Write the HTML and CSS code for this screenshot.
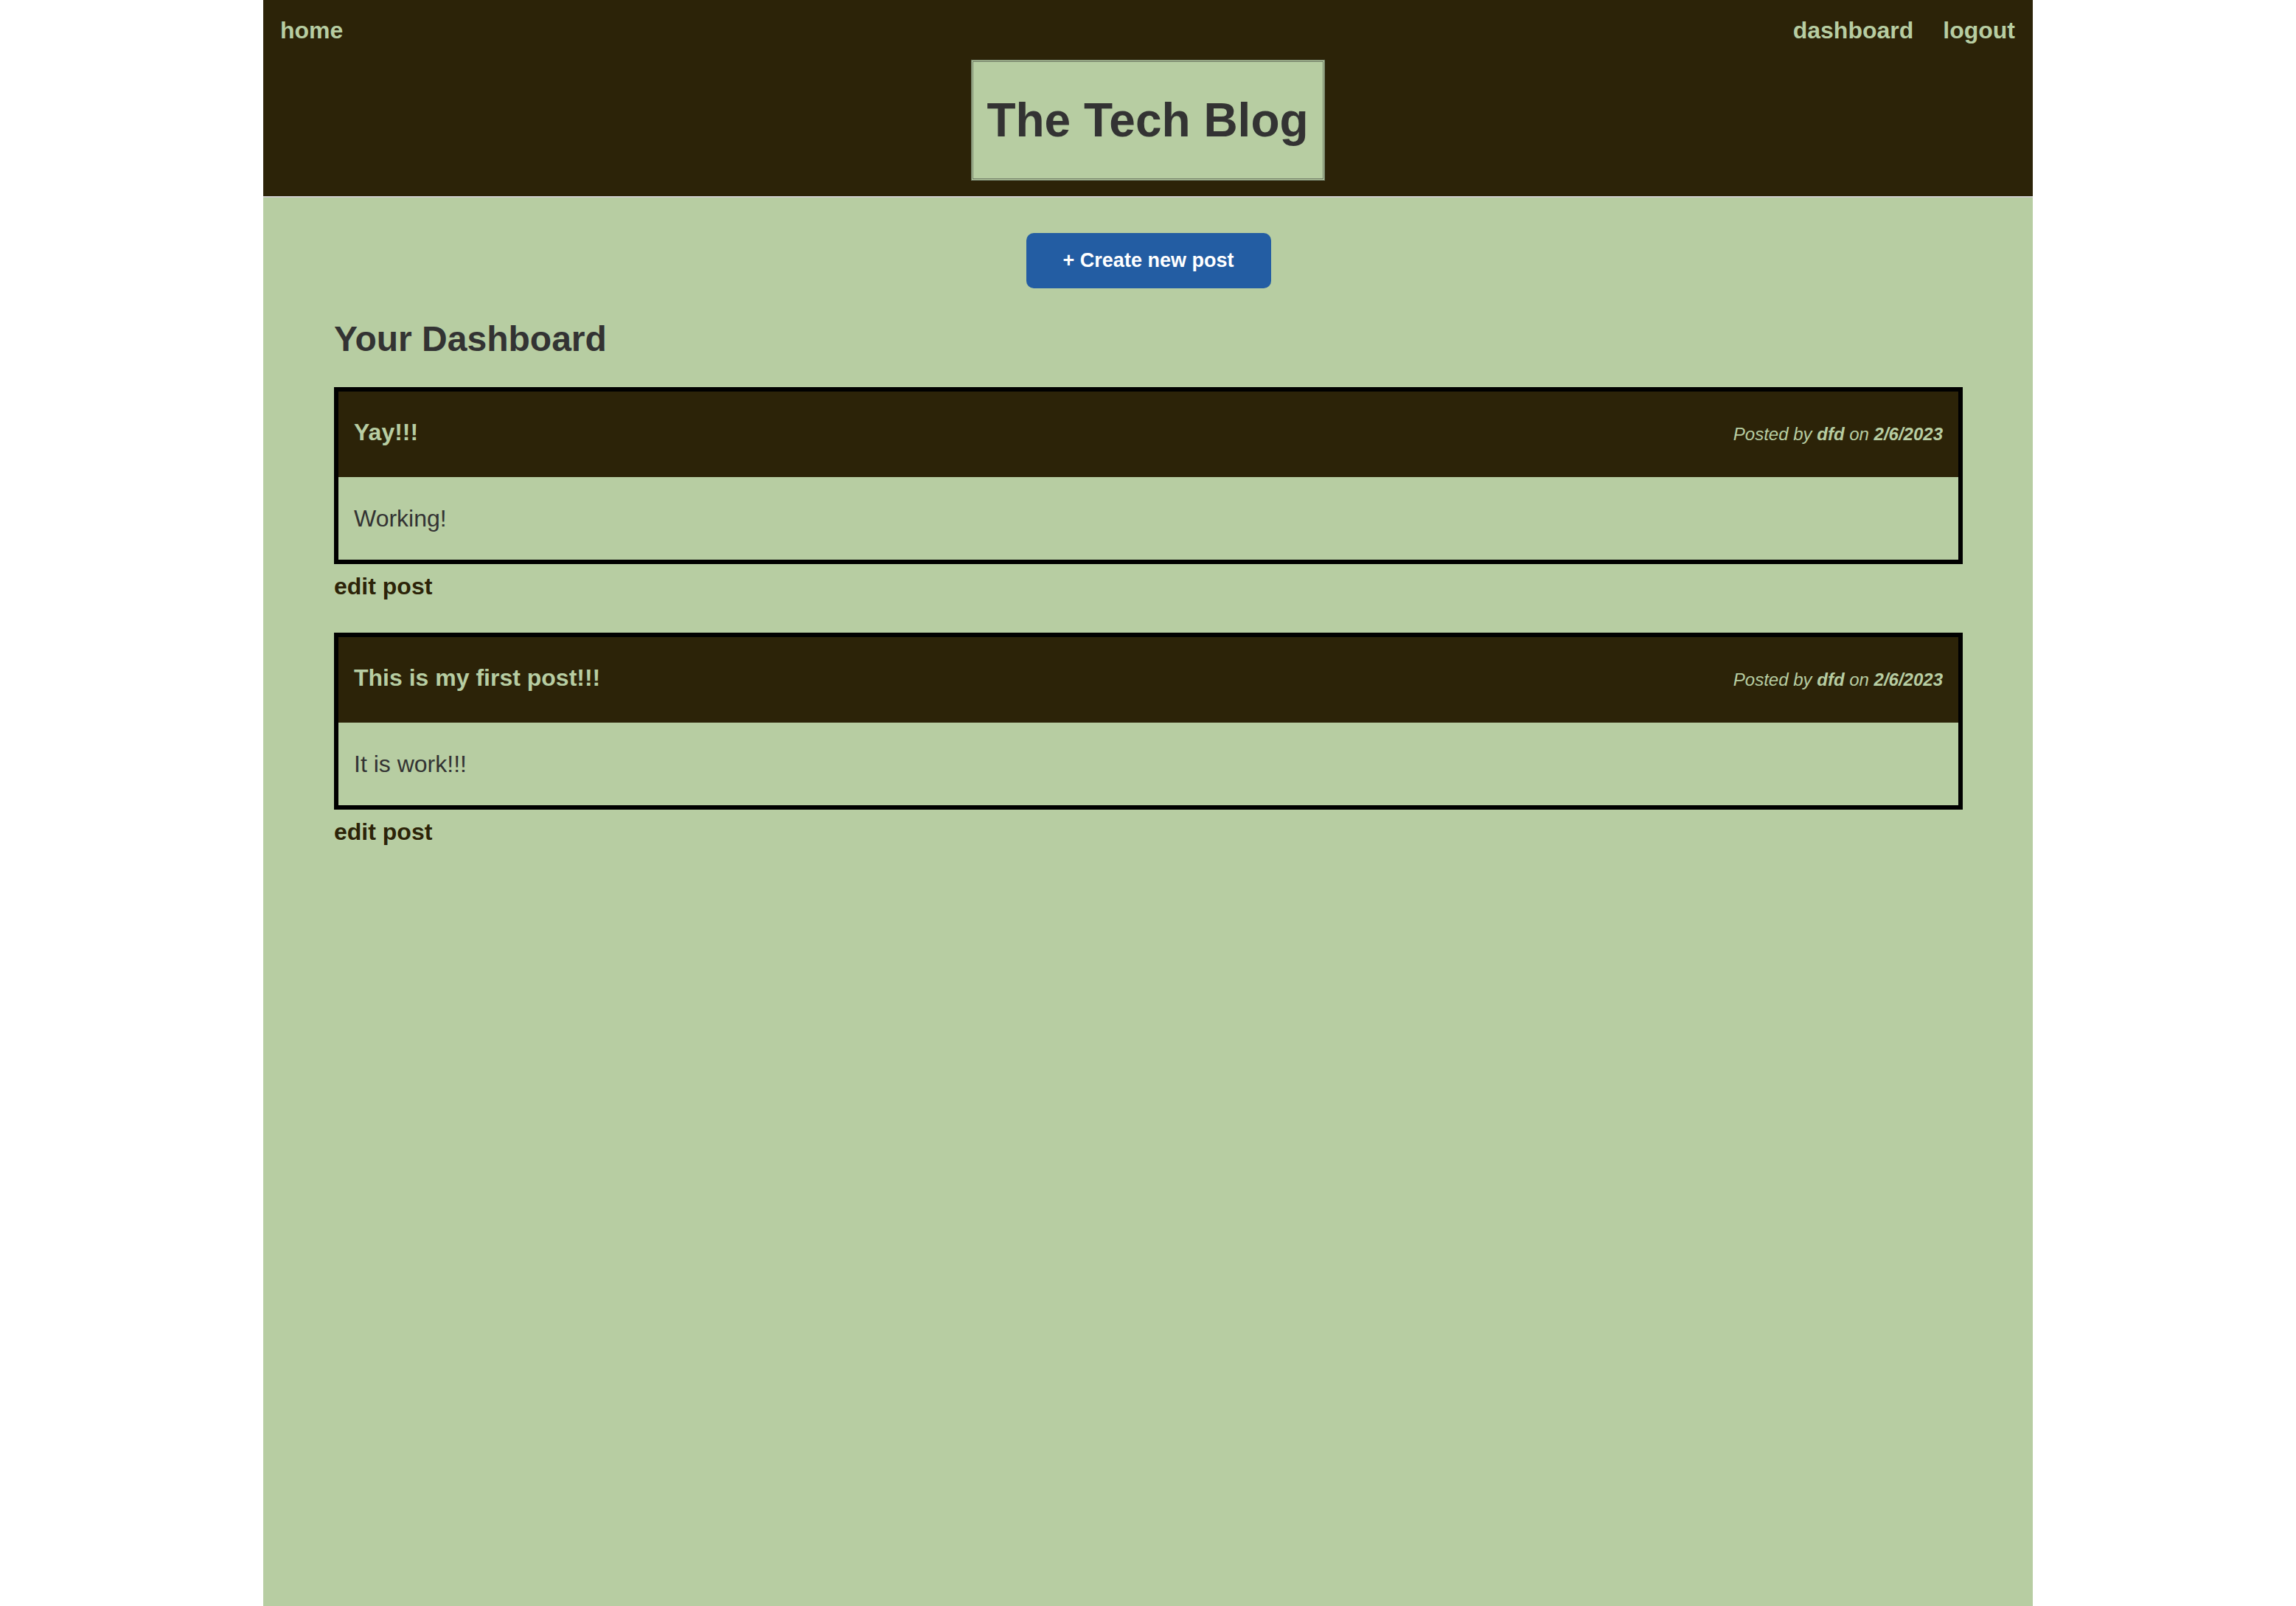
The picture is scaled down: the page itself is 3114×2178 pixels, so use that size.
FILE: index.html
```html
<!DOCTYPE html>
<html lang="en">
<head>
<meta charset="utf-8">
<title>The Tech Blog</title>
<link rel="stylesheet" href="styles.css">
</head>
<body>
<div class="page">
  <header class="site-header">
    <nav class="nav">
      <a class="nav-link" href="#">home</a>
      <div class="nav-right">
        <a class="nav-link" href="#">dashboard</a>
        <a class="nav-link" href="#">logout</a>
      </div>
    </nav>
    <div class="brand">
      <h1 class="brand-title">The Tech Blog</h1>
    </div>
  </header>
  <main class="main">
    <div class="actions">
      <button class="btn-create">+ Create new post</button>
    </div>
    <h2 class="dash-title">Your Dashboard</h2>

    <article class="post">
      <div class="post-head">
        <h3 class="post-title">Yay!!!</h3>
        <p class="post-meta">Posted by <b>dfd</b> on <b>2/6/2023</b></p>
      </div>
      <div class="post-body">Working!</div>
    </article>
    <a class="edit-link" href="#">edit post</a>

    <article class="post">
      <div class="post-head">
        <h3 class="post-title">This is my first post!!!</h3>
        <p class="post-meta">Posted by <b>dfd</b> on <b>2/6/2023</b></p>
      </div>
      <div class="post-body">It is work!!!</div>
    </article>
    <a class="edit-link" href="#">edit post</a>
  </main>
</div>
</body>
</html>
```

FILE: styles.css
```css
html, body {
  margin: 0;
  padding: 0;
  background: #ffffff;
}

body {
  font-family: "Liberation Sans", Helvetica, Arial, sans-serif;
}

.page {
  width: 2400px;
  margin: 0 auto;
  min-height: 100vh;
  background: #b7cda2;
}

.site-header {
  background: #2c2308;
  border-bottom: 2px solid #cccccc;
  padding: 23px 24px 21px 23px;
  display: flex;
  flex-direction: column;
  align-items: center;
}

.nav {
  align-self: stretch;
  display: flex;
  justify-content: space-between;
  align-items: center;
  height: 37px;
}

.nav-right {
  display: flex;
  gap: 40px;
}

.nav-link {
  color: #b7cda2;
  font-weight: bold;
  font-size: 32px;
  line-height: 37px;
  text-decoration: none;
}

.brand {
  margin-top: 21px;
  width: 480px;
  box-sizing: border-box;
  background: #b7cda2;
  border: 3px double #6d7963;
  padding: 43px 10px;
  text-align: center;
}

.brand-title {
  margin: 0;
  font-size: 64px;
  line-height: 72px;
  font-weight: bold;
  color: #333333;
}

.main {
  padding: 48px 95px 40px 96px;
}

.actions {
  display: flex;
  justify-content: center;
}

.btn-create {
  width: 332px;
  height: 75px;
  border: none;
  border-radius: 10px;
  background: #235da3;
  color: #ffffff;
  font-family: "Liberation Sans", Helvetica, Arial, sans-serif;
  font-weight: bold;
  font-size: 27px;
  padding: 0;
  cursor: pointer;
}

.dash-title {
  margin: 41px 0 38px;
  font-size: 48px;
  line-height: 55px;
  font-weight: bold;
  color: #333333;
}

.post {
  border: 6px solid #000000;
  background: #b7cda2;
}

.post-head {
  background: #2c2308;
  display: flex;
  justify-content: space-between;
  align-items: baseline;
  padding: 37px 21px 42px 21px;
}

.post-title {
  margin: 0;
  font-size: 32px;
  line-height: 37px;
  font-weight: bold;
  color: #b7cda2;
}

.post-meta {
  margin: 0;
  font-size: 24px;
  font-style: italic;
  color: #b7cda2;
}

.post-body {
  padding: 38px 21px 37px 21px;
  font-size: 32px;
  line-height: 37px;
  color: #333333;
}

.edit-link {
  display: block;
  margin: 12px 0 44px;
  font-size: 32px;
  line-height: 37px;
  font-weight: bold;
  color: #2c2308;
  text-decoration: none;
}
```
